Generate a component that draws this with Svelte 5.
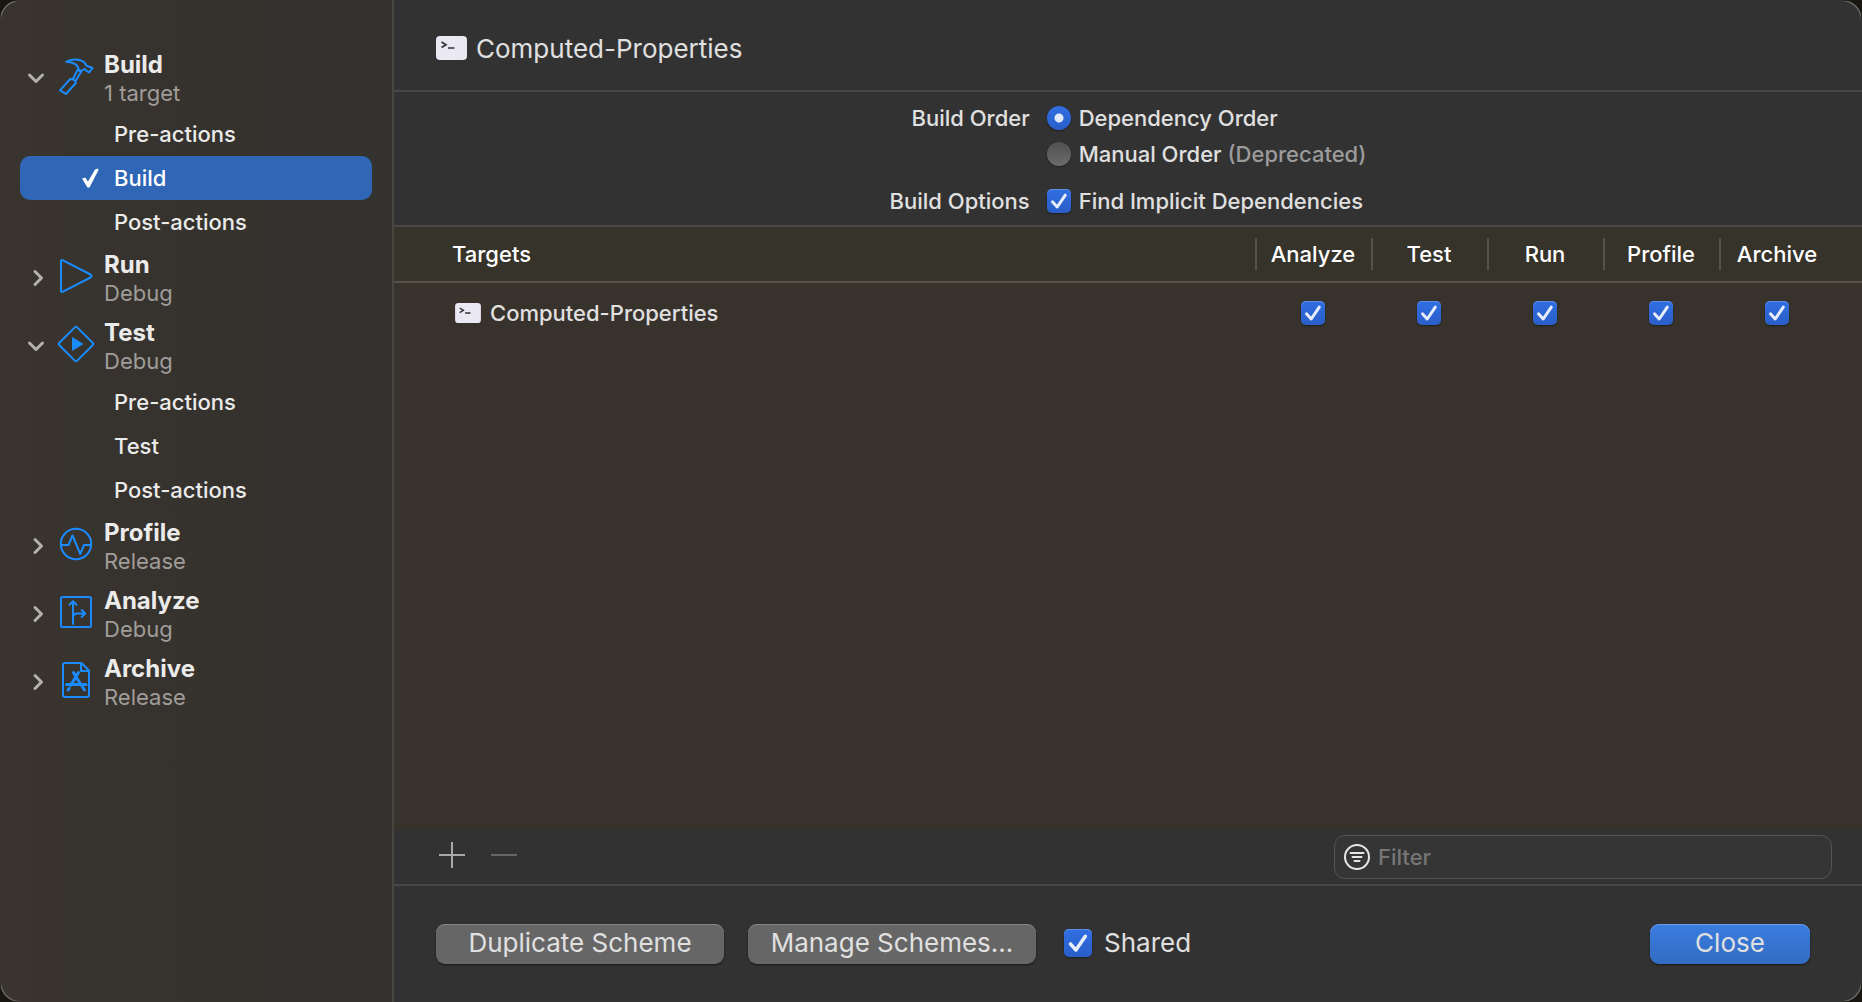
<script>
  const groups = [
    { icon: 'hammer', title: 'Build', subtitle: '1 target', open: true, items: ['Pre-actions', 'Build', 'Post-actions'], selected: 'Build' },
    { icon: 'run', title: 'Run', subtitle: 'Debug' },
    { icon: 'test', title: 'Test', subtitle: 'Debug', open: true, items: ['Pre-actions', 'Test', 'Post-actions'] },
    { icon: 'profile', title: 'Profile', subtitle: 'Release' },
    { icon: 'analyze', title: 'Analyze', subtitle: 'Debug' },
    { icon: 'archive', title: 'Archive', subtitle: 'Release' }
  ];
  const actions = ['Analyze', 'Test', 'Run', 'Profile', 'Archive'];
  let filter = $state('');
  let order = $state('dependency');
</script>

{#snippet check(name, label)}
  <span class="check">
    <input type="checkbox" id={name} aria-label={label} checked />
    <svg viewBox="0 0 24 24" aria-hidden="true"><path d="M5.500 12.800 10.200 18 18.300 6.200" /></svg>
  </span>
{/snippet}

{#snippet terminal()}
  <svg class="terminal" viewBox="0 0 31 24" aria-hidden="true">
    <rect width="31" height="24" rx="4" fill="#e9e8f3" />
    <path d="M5.500 6 10 8.800 5.500 11.500M12 12H18.500" fill="none" stroke="#333" stroke-width="1.700" />
  </svg>
{/snippet}

<div class="window">
  <nav class="sidebar" aria-label="Scheme actions">
    {#each groups as group}
      <button class="group" aria-expanded={!!group.open}>
        <svg class="chevron" viewBox="0 0 20 20" aria-hidden="true">
          {#if group.open}<path d="M3.500 7 10 13.500 16.500 7" />{:else}<path d="M9 3.500 15.500 10 9 16.500" />{/if}
        </svg>
        <svg class="icon" viewBox="0 0 40 40" aria-hidden="true">
          {#if group.icon === 'hammer'}
            <path d="M10.200 5.800C16 2.500 24 2.600 28.500 6.600L30.500 9.800 36.500 12 33.200 16.500 29.800 14.300 28.800 12.800 25 15 22.500 13.800C22.500 9.200 18.500 6.400 10.200 5.800ZM21.500 14 25.200 15.700 19.500 25 16.800 23.300 21.500 14M16.800 23.300 19.500 25 19.800 27 10 38 4 34.300 14.200 23Z" />
          {:else if group.icon === 'run'}
            <path d="M5 5.500Q5 3.500 7 4.400L34.500 18.500Q36.500 20 34.500 21.500L7 35.600Q5 36.500 5 34.500Z" />
          {:else if group.icon === 'test'}
            <path d="M18.800 3.400Q20 2.200 21.200 3.400L36.600 18.800Q37.800 20 36.600 21.200L21.200 36.600Q20 37.800 18.800 36.600L3.400 21.200Q2.200 20 3.400 18.800Z" />
            <path class="solid" d="M16 13 27.500 20 16 27Z" />
          {:else if group.icon === 'profile'}
            <circle cx="20" cy="20" r="15.200" />
            <path d="M5 21H12.500L16.500 11.500 24.300 30 28 21H35" />
          {:else if group.icon === 'analyze'}
            <rect x="5" y="5" width="30" height="30" rx="1.500" />
            <path d="M17 32V10M13.500 12.800 17 9.300 20.500 12.800M17 26C17 22.500 18.500 21.500 21.500 21.500H29M25.700 18 29.200 21.500 25.700 25" />
          {:else}
            <path d="M25.500 3H9Q7 3 7 5V35Q7 37 9 37H31Q33 37 33 35V10.500ZM25 3V11H33" />
            <path class="thick" d="M17.500 12.500 19.800 16.500M22.500 12.500 14.500 25.500M19.800 16.500 28.500 30M10.500 24.500H22.500M27 24.500H30M13 28.500 12 30" />
          {/if}
        </svg>
        <span class="names"><strong>{group.title}</strong><small>{group.subtitle}</small></span>
      </button>
      {#each group.items ?? [] as item}
        <button class="item" class:selected={item === group.selected}>
          <span class="mark">
            {#if item === group.selected}
              <svg viewBox="0 0 20 22" aria-hidden="true"><path d="M2 11.500 5.200 10.500 8 14.500 15 2.500 18 1.500 18.500 3 9.500 20.500H7.500Z" /></svg>
            {/if}
          </span>
          {item}
        </button>
      {/each}
    {/each}
  </nav>

  <main>
    <header>{@render terminal()}<h1>Computed-Properties</h1></header>

    <section class="options">
      <span class="caption" id="order">Build Order</span>
      <div class="radios" role="radiogroup" aria-labelledby="order">
        <label><input type="radio" name="order" value="dependency" bind:group={order} />Dependency Order</label>
        <label><input type="radio" name="order" value="manual" bind:group={order} /><span>Manual Order <em>(Deprecated)</em></span></label>
      </div>
      <span class="caption">Build Options</span>
      <label for="implicit">{@render check('implicit')}Find Implicit Dependencies</label>
    </section>

    <section class="targets">
      <table>
        <thead>
          <tr>
            <th class="name">Targets</th>
            {#each actions as action}<th class="action"><span>{action}</span></th>{/each}
            <th class="end"></th>
          </tr>
        </thead>
        <tbody>
          <tr>
            <td class="name"><div class="target">{@render terminal()}Computed-Properties</div></td>
            {#each actions as action}<td class="action">{@render check('target-' + action, action)}</td>{/each}
            <td class="end"></td>
          </tr>
        </tbody>
      </table>
    </section>

    <section class="toolbar">
      <button class="tool" aria-label="Add target"><svg viewBox="0 0 28 28" aria-hidden="true"><path d="M1 14H27M14 1V27" /></svg></button>
      <button class="tool" aria-label="Remove target" disabled><svg viewBox="0 0 28 28" aria-hidden="true"><path d="M1 14H27" /></svg></button>
      <label class="filter">
        <svg viewBox="0 0 28 28" aria-hidden="true"><circle cx="14" cy="14" r="12" /><path d="M7.500 10H20.500M9.500 14H18.500M11.500 18H16.500" /></svg>
        <input type="text" placeholder="Filter" aria-label="Filter" bind:value={filter} />
      </label>
    </section>

    <footer>
      <button class="push">Duplicate Scheme</button>
      <button class="push">Manage Schemes...</button>
      <label class="shared" for="shared">{@render check('shared')}Shared</label>
      <button class="push primary">Close</button>
    </footer>
  </main>
</div>

<style>
  :global(body) { margin: 0; background: #17160f; }
  .window, .window * { box-sizing: border-box; }
  .window {
    position: relative;
    display: flex;
    min-height: 100vh;
    overflow: hidden;
    border-radius: 20px;
    background: #323232;
    color: #e0e0e0;
    font: 450 22px/28px Inter, "Liberation Sans", sans-serif;
  }
  /* Light rim that shows along the rounded corners only */
  .window::after {
    content: '';
    position: absolute;
    inset: -1px;
    border: 2px solid #6a6966;
    border-radius: 22px;
    clip-path: inset(2px);
    pointer-events: none;
  }
  button { margin: 0; padding: 0; border: 0; background: none; color: inherit; font: inherit; text-align: left; }
  input { margin: 0; }
  svg { display: block; flex: none; fill: none; }

  .sidebar {
    flex: none;
    width: 394px;
    padding: 44px 20px 0;
    border-right: 2px solid #484640;
    background: linear-gradient(90deg, #39342d, #36322e 40%, #33322e);
  }
  .group { display: flex; align-items: center; width: 100%; height: 68px; padding-left: 6px; }
  .chevron { width: 20px; height: 20px; stroke: #b3b0ad; stroke-width: 3; stroke-linecap: round; stroke-linejoin: round; }
  .icon { width: 40px; height: 40px; margin: 0 8px 4px 10px; stroke: #1a8cff; stroke-width: 2; stroke-linejoin: round; stroke-linecap: round; }
  .solid { fill: #1a8cff; stroke: none; }
  .thick { stroke-width: 3; }
  .names { display: flex; flex-direction: column; padding-top: 2px; }
  strong { color: #ebebea; font-size: 24px; font-weight: 650; }
  small { color: #a09d9a; font-size: 22px; font-weight: 400; }
  .item { display: flex; align-items: center; width: 100%; height: 44px; border-radius: 10px; color: #ebebea; }
  .item.selected { background: #2f66b5; color: #fff; }
  .mark { width: 94px; padding-left: 60px; }
  .mark svg { width: 20px; height: 22px; fill: #fff; }

  main { display: flex; flex: 1; flex-direction: column; min-width: 0; }
  header { display: flex; align-items: center; gap: 9px; height: 92px; padding: 6px 42px 0; border-bottom: 2px solid #474747; }
  h1 { margin: 0; padding-top: 2px; font-size: 26px; font-weight: 400; line-height: 32px; }
  .terminal { width: 31px; height: 24px; }

  .options {
    display: grid;
    grid-template-columns: auto auto;
    justify-content: center;
    gap: 19px 17px;
    padding: 12px 0 10px;
    border-bottom: 2px solid #474747;
  }
  .caption { text-align: right; }
  .radios { display: flex; flex-direction: column; gap: 8px; }
  .options label { display: flex; align-items: center; gap: 8px; }
  em { color: #9b9b9b; font-style: normal; }
  input[type='radio'] {
    appearance: none;
    width: 24px;
    height: 24px;
    border-radius: 50%;
    background: linear-gradient(#505050, #6b6b6b);
    box-shadow: 0 1px 2px #0006;
  }
  input[type='radio']:checked {
    background: radial-gradient(circle, #e1e9fa 4px, transparent 5px), linear-gradient(#306fe2, #2a5ec8);
  }
  .check { display: grid; flex: none; width: 24px; height: 24px; }
  .check > * { grid-area: 1 / 1; width: 100%; height: 100%; }
  .check input {
    appearance: none;
    border-radius: 5px;
    background: linear-gradient(#306fe2, #2a5ec8);
    box-shadow: inset 0 1px #5c8ee8, 0 1px 2px #0006;
  }
  .check svg { pointer-events: none; stroke: #e6edfb; stroke-width: 3; stroke-linecap: round; stroke-linejoin: round; }

  .targets { flex: 1; background: #38322c; }
  table { width: 100%; border-collapse: separate; border-spacing: 0; table-layout: fixed; }
  th, td { padding: 0; text-align: center; }
  th { height: 56px; border-bottom: 2px solid #56534b; background: #36332b; color: #fff; font-weight: 500; }
  td { height: 60px; }
  td .check { margin: 0 auto; }
  .name { text-align: left; }
  th.name { padding-left: 58px; }
  .action { width: 116px; }
  th.action span { display: block; padding-right: 2px; border-left: 2px solid #56534b; line-height: 32px; }
  .end { width: 27px; }
  .target { display: flex; align-items: center; gap: 9px; padding-left: 61px; }
  .target .terminal { width: 26px; height: 20px; }

  .toolbar { display: flex; align-items: center; gap: 24px; height: 56px; padding: 0 30px 0 44px; border-bottom: 2px solid #474747; }
  .tool { padding-bottom: 4px; }
  .tool svg { width: 28px; height: 28px; stroke: #a8a8a8; stroke-width: 2; }
  .tool:disabled svg { stroke: #666; }
  .filter {
    display: flex;
    align-items: center;
    gap: 7px;
    width: 498px;
    height: 44px;
    margin-left: auto;
    padding: 0 8px;
    border: 1px solid #545454;
    border-radius: 11px;
    background: #353535;
  }
  .filter svg { width: 28px; height: 28px; stroke: #e6e6e6; stroke-width: 2; stroke-linecap: round; }
  .filter input { flex: 1; min-width: 0; padding: 0; border: 0; outline: 0; background: none; color: inherit; font: inherit; }
  .filter input::placeholder { color: #767676; opacity: 1; }

  footer { display: flex; align-items: center; gap: 24px; height: 116px; padding: 0 52px 0 42px; font-size: 26px; font-weight: 400; }
  .push {
    width: 288px;
    height: 40px;
    padding-bottom: 2px;
    border-radius: 9px;
    background: #666;
    box-shadow: inset 0 1px #858585, 0 1px 2px #0008;
    text-align: center;
  }
  .shared { display: flex; align-items: center; gap: 12px; padding: 0 0 3px 4px; }
  .shared .check { width: 28px; height: 28px; }
  .primary { width: 160px; margin-left: auto; background: linear-gradient(#3a7ce0, #336cc2); box-shadow: inset 0 1px #6b9ee9, 0 1px 2px #0008; }
</style>
